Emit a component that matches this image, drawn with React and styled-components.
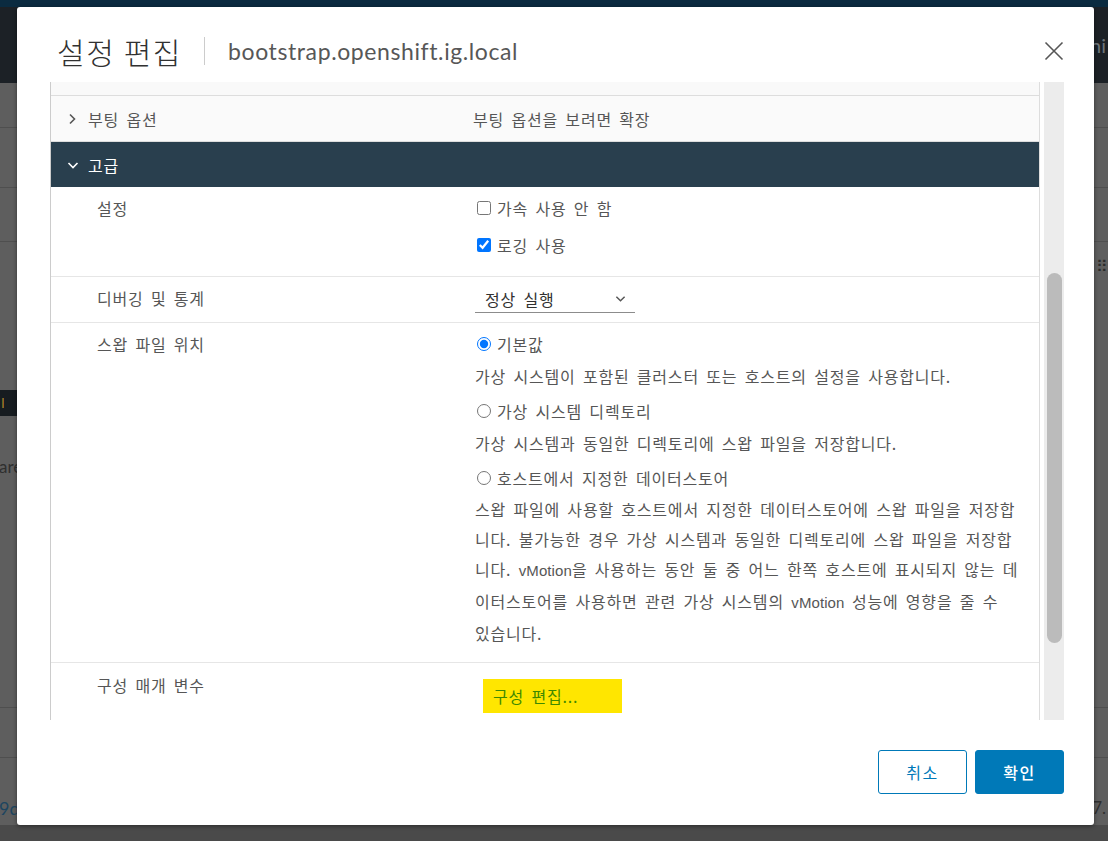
import React from "react";
import styled, { createGlobalStyle } from "styled-components";

const GlobalStyle = createGlobalStyle`
  html, body {
    margin: 0;
    padding: 0;
  }
  body {
    width: 1108px;
    height: 841px;
    overflow: hidden;
    background: #5e5e5e;
    font-family: "Noto Sans CJK KR", "Noto Sans", sans-serif;
  }
  * {
    box-sizing: border-box;
  }
`;

const Chevron = ({ dir = "right", color = "#565656", size = 12 }) => (
  <svg width={size} height={size} viewBox="0 0 12 12" fill="none">
    {dir === "right" ? (
      <path d="M4 1.5 L8.5 6 L4 10.5" stroke={color} strokeWidth="1.6" />
    ) : (
      <path d="M1.5 4 L6 8.5 L10.5 4" stroke={color} strokeWidth="1.6" />
    )}
  </svg>
);

const CloseIcon = () => (
  <svg width="20" height="20" viewBox="0 0 20 20" fill="none">
    <path d="M1.5 1.5 L18.5 18.5 M18.5 1.5 L1.5 18.5" stroke="#565656" strokeWidth="1.6" />
  </svg>
);

const App = () => {
  return (
    <>
      <GlobalStyle />
      <Page>
        <AppTop />
        <AppHeader>
          <HeaderText>ni</HeaderText>
        </AppHeader>
        <AppBody>
          <Strip h={45} />
          <Strip h={60} />
          <Strip h={54} />
          <Strip h={148} none>
            <Dots>⠿</Dots>
          </Strip>
          <DarkTag>I</DarkTag>
          <Strip h={292}>
            <BgText>are</BgText>
          </Strip>
          <Strip h={50} />
          <Strip h={67} none>
            <BgLink>9d</BgLink>
            <BgText side>7.</BgText>
          </Strip>
        </AppBody>

        <Modal>
          <ModalHeader>
            <Title>설정 편집</Title>
            <Divider />
            <Subtitle>bootstrap.openshift.ig.local</Subtitle>
            <CloseButton>
              <CloseIcon />
            </CloseButton>
          </ModalHeader>

          <ModalBody>
            <ScrollArea>
              <PartialRow />
              <SectionHeader>
                <SectionTitle>
                  <Chevron dir="right" />
                  부팅 옵션
                </SectionTitle>
                <Value>부팅 옵션을 보려면 확장</Value>
              </SectionHeader>
              <SectionHeader dark>
                <SectionTitle dark>
                  <Chevron dir="down" color="#ffffff" />
                  고급
                </SectionTitle>
              </SectionHeader>

              <Row>
                <Label>설정</Label>
                <Stack gap={15}>
                  <Option>
                    <Check type="checkbox" />
                    가속 사용 안 함
                  </Option>
                  <Option>
                    <Check type="checkbox" defaultChecked />
                    로깅 사용
                  </Option>
                </Stack>
              </Row>

              <Row pb={9}>
                <Label>디버깅 및 통계</Label>
                <div>
                  <Select>
                    정상 실행
                    <Chevron dir="down" color="#565656" size={11} />
                  </Select>
                </div>
              </Row>

              <Row pb={14}>
                <Label>스왑 파일 위치</Label>
                <Stack>
                  <Option>
                    <Radio type="radio" name="swap" defaultChecked />
                    기본값
                  </Option>
                  <Desc>가상 시스템이 포함된 클러스터 또는 호스트의 설정을 사용합니다.</Desc>
                  <Option top={9}>
                    <Radio type="radio" name="swap" />
                    가상 시스템 디렉토리
                  </Option>
                  <Desc>가상 시스템과 동일한 디렉토리에 스왑 파일을 저장합니다.</Desc>
                  <Option top={9}>
                    <Radio type="radio" name="swap" />
                    호스트에서 지정한 데이터스토어
                  </Option>
                  <Desc top={5}>
                    스왑 파일에 사용할 호스트에서 지정한 데이터스토어에 스왑 파일을 저장합
                    <br />
                    니다. 불가능한 경우 가상 시스템과 동일한 디렉토리에 스왑 파일을 저장합
                    <br />
                    니다. <Latin>vMotion</Latin>을 사용하는 동안 둘 중 어느 한쪽 호스트에 표시되지 않는 데
                    <br />
                    이터스토어를 사용하면 관련 가상 시스템의 <Latin>vMotion</Latin> 성능에 영향을 줄 수
                    <br />
                    있습니다.
                  </Desc>
                </Stack>
              </Row>

              <Row pt={11} last>
                <Label>구성 매개 변수</Label>
                <div>
                  <EditButton>구성 편집...</EditButton>
                </div>
              </Row>
            </ScrollArea>
            <Track>
              <Thumb />
            </Track>
          </ModalBody>

          <Footer>
            <Button>취소</Button>
            <Button primary>확인</Button>
          </Footer>
        </Modal>
      </Page>
    </>
  );
};

export default App;

const Page = styled.div`
  position: relative;
  width: 1108px;
  height: 841px;
  display: flex;
  flex-direction: column;
  background: #5e5e5e;
`;

const AppTop = styled.div`
  height: 7px;
  background: #0b2b40;
`;

const AppHeader = styled.div`
  height: 76px;
  background: #1c2126;
  display: flex;
  align-items: center;
  justify-content: flex-end;
  overflow: hidden;
`;

const HeaderText = styled.span`
  font-family: "Lato", sans-serif;
  font-size: 20px;
  color: #6e7478;
  padding-right: 2px;
`;

const AppBody = styled.div`
  flex: 1;
  display: flex;
  flex-direction: column;
  background: #5e5e5e;
  border-bottom: 16px solid #4a4a4a;
  overflow: hidden;
`;

const Strip = styled.div`
  height: ${(p) => p.h}px;
  flex-shrink: 0;
  border-bottom: 1px solid ${(p) => (p.none ? "transparent" : "#4f4f4f")};
  display: flex;
  align-items: flex-start;
  justify-content: space-between;
`;

const Dots = styled.span`
  margin: 14px 0 0 auto;
  font-size: 16px;
  line-height: 18px;
  color: #2b2b2b;
`;

const DarkTag = styled.div`
  height: 26px;
  width: 40px;
  background: #171c20;
  color: #b58a2a;
  font-size: 13px;
  line-height: 26px;
  padding-left: 1px;
  flex-shrink: 0;
`;

const BgText = styled.span`
  font-family: "Lato", sans-serif;
  font-size: 17px;
  line-height: 20px;
  color: #2f2f2f;
  margin: ${(p) => (p.side ? "40px 2px 0 auto" : "41px 0 0 -1px")};
`;

const BgLink = styled.span`
  font-family: "Lato", sans-serif;
  font-size: 18px;
  line-height: 20px;
  color: #1d4560;
  margin: 40px 0 0 -1px;
`;

const Modal = styled.div`
  position: absolute;
  left: 17px;
  top: 7px;
  width: 1077px;
  height: 818px;
  background: #ffffff;
  border-radius: 3px;
  box-shadow: 0 1px 4px rgba(0, 0, 0, 0.45);
  display: flex;
  flex-direction: column;
`;

const ModalHeader = styled.div`
  height: 75px;
  flex-shrink: 0;
  display: flex;
  align-items: center;
  padding: 12px 30px 0 40px;
`;

const Title = styled.h3`
  margin: 0;
  font-size: 30px;
  font-weight: 300;
  color: #313131;
  letter-spacing: 1.6px;
`;

const Divider = styled.span`
  width: 1px;
  height: 28px;
  background: #cccccc;
  margin: 0 23px 0 22px;
`;

const Subtitle = styled.span`
  font-family: "Lato", sans-serif;
  font-size: 23px;
  color: #575757;
  letter-spacing: 0.6px;
`;

const CloseButton = styled.button`
  margin-left: auto;
  border: none;
  background: none;
  padding: 0;
  display: flex;
  cursor: pointer;
`;

const ModalBody = styled.div`
  height: 638px;
  flex-shrink: 0;
  margin: 0 30px 0 33px;
  display: flex;
  gap: 4px;
`;

const ScrollArea = styled.div`
  flex: 1;
  overflow: hidden;
  border-left: 1px solid #cccccc;
  border-right: 1px solid #dddddd;
`;

const Track = styled.div`
  width: 20px;
  background: #ececec;
  padding: 191px 2px 0 3px;
`;

const Thumb = styled.div`
  height: 370px;
  background: #bbbbbb;
  border-radius: 8px;
`;

const PartialRow = styled.div`
  height: 14px;
  background: #f9f9f9;
  border-bottom: 1px solid #dddddd;
`;

const SectionHeader = styled.div`
  height: ${(p) => (p.dark ? 45 : 46)}px;
  display: grid;
  grid-template-columns: 422px 1fr;
  align-items: center;
  background: ${(p) => (p.dark ? "#293f4e" : "#fafafa")};
  border-bottom: ${(p) => (p.dark ? "none" : "1px solid #dddddd")};
  font-size: 16px;
  color: #565656;
  letter-spacing: 0.8px;
  word-spacing: 3px;
`;

const SectionTitle = styled.div`
  display: flex;
  align-items: center;
  gap: ${(p) => (p.dark ? 9 : 10)}px;
  padding-left: ${(p) => (p.dark ? 16 : 15)}px;
  color: ${(p) => (p.dark ? "#ffffff" : "#565656")};
`;

const Row = styled.div`
  display: grid;
  grid-template-columns: 424px 1fr;
  padding: ${(p) => p.pt ?? 10}px 0 ${(p) => p.pb ?? 20}px;
  border-bottom: ${(p) => (p.last ? "none" : "1px solid #e6e6e6")};
  font-size: 16px;
  color: #565656;
  letter-spacing: 0.8px;
  word-spacing: 3px;
`;

const Label = styled.div`
  padding-left: 46px;
  line-height: 22px;
`;

const Value = styled.div`
  line-height: 22px;
`;

const Stack = styled.div`
  display: flex;
  flex-direction: column;
  gap: ${(p) => p.gap ?? 0}px;
  padding-right: 6px;
`;

const Option = styled.label`
  display: flex;
  align-items: center;
  line-height: 22px;
  margin-top: ${(p) => p.top ?? 0}px;
`;

const Check = styled.input`
  width: 14px;
  height: 14px;
  margin: 0 6px 0 2px;
  accent-color: #0075ff;
`;

const Radio = styled.input`
  width: 14px;
  height: 14px;
  margin: 0 6px 0 2px;
  accent-color: #0075ff;
`;

const Desc = styled.p`
  margin: ${(p) => p.top ?? 6}px 0 0;
  line-height: 30px;
  white-space: nowrap;
`;

const Latin = styled.span`
  font-family: "Liberation Sans", sans-serif;
  font-size: 15px;
  letter-spacing: 0.1px;
`;

const Select = styled.div`
  width: 160px;
  height: 26px;
  display: flex;
  align-items: center;
  justify-content: space-between;
  padding: 0 9px 2px 10px;
  border-bottom: 1px solid #8c8c8c;
  color: #313131;
`;

const EditButton = styled.button`
  margin-left: 8px;
  margin-top: 5px;
  width: 139px;
  height: 34px;
  border: none;
  border-radius: 0;
  background: #ffe600;
  color: #3f8a00;
  font-family: inherit;
  font-size: 16px;
  letter-spacing: 0.8px;
  word-spacing: 3px;
  text-align: left;
  padding: 0 0 0 10px;
  cursor: pointer;
`;

const Footer = styled.div`
  flex: 1;
  display: flex;
  justify-content: flex-end;
  align-items: flex-start;
  gap: 8px;
  padding: 30px 30px 0 0;
`;

const Button = styled.button`
  width: 89px;
  height: 44px;
  border-radius: 3px;
  border: 1px solid #0079b8;
  background: ${(p) => (p.primary ? "#0079b8" : "#ffffff")};
  color: ${(p) => (p.primary ? "#ffffff" : "#0079b8")};
  font-family: inherit;
  font-size: 16px;
  font-weight: ${(p) => (p.primary ? 500 : 400)};
  letter-spacing: 1.5px;
  cursor: pointer;
`;
